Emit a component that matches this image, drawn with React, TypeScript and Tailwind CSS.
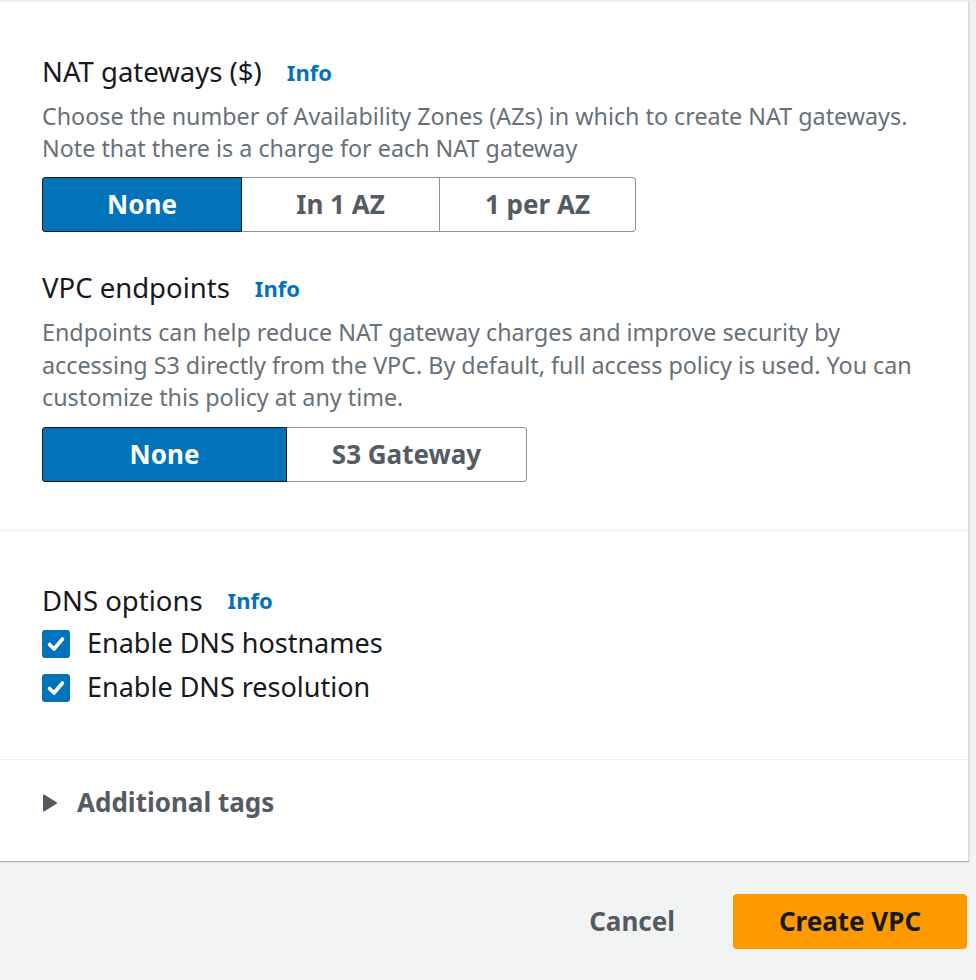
import React from "react";

const font = { fontFamily: '"Noto Sans", "Open Sans", sans-serif' };

function Info() {
  return <span className="ml-[25px] text-[22px] font-bold text-[#0073bb]">Info</span>;
}

function Segmented({ options, widths }: { options: string[]; widths: number[] }) {
  return (
    <div className="flex">
      {options.map((o, i) => {
        const sel = i === 0;
        const first = i === 0;
        const last = i === options.length - 1;
        return (
          <div
            key={o}
            style={{ width: widths[i] }}
            className={
              "h-[55px] flex items-center justify-center text-[26px] font-bold border " +
              (sel
                ? "bg-[#0073bb] text-white border-[#16191f] z-10 "
                : "bg-white text-[#545b64] border-[#879596] -ml-px ") +
              (first ? "rounded-l-[3px] " : "") +
              (last ? "rounded-r-[3px]" : "")
            }
          >
            {o}
          </div>
        );
      })}
    </div>
  );
}

function Check({ label }: { label: string }) {
  return (
    <div className="h-[44px] flex items-center">
      <div className="w-[28px] h-[28px] rounded-[3px] bg-[#0073bb] flex items-center justify-center">
        <svg width="22" height="22" viewBox="0 0 22 22">
          <path d="M4.5 11.5 L9 16 L17.5 6" fill="none" stroke="white" strokeWidth="3.6" strokeLinecap="round" strokeLinejoin="round" />
        </svg>
      </div>
      <span className="ml-[17px] text-[27px] text-[#16191f]">{label}</span>
    </div>
  );
}

export default function App() {
  return (
    <div style={font} className="w-[976px] h-[980px] bg-[#f2f3f3] flex flex-col">
      <div className="h-[2px] bg-[#eaeded]" />
      <div className="w-[969px] bg-white border-r border-[#d5dbdb] shadow-[0_1px_1px_0_rgba(0,28,36,0.3)]">
        <div className="px-[42px] pt-[54px] pb-[48px] border-b border-[#eaeded]">
          <div className="h-[32px] flex items-center text-[27.5px] text-[#16191f]">
            NAT gateways ($)
            <Info />
          </div>
          <div className="mt-[12px] text-[23.3px] leading-[32px] text-[#687078] whitespace-nowrap">
            Choose the number of Availability Zones (AZs) in which to create NAT gateways.
            <br />
            Note that there is a charge for each NAT gateway
          </div>
          <div className="mt-[13px]">
            <Segmented options={["None", "In 1 AZ", "1 per AZ"]} widths={[200, 199, 197]} />
          </div>
          <div className="mt-[40px] h-[32px] flex items-center text-[27.5px] text-[#16191f]">
            VPC endpoints
            <Info />
          </div>
          <div className="mt-[12px] text-[23.3px] leading-[32.5px] text-[#687078] whitespace-nowrap">
            Endpoints can help reduce NAT gateway charges and improve security by
            <br />
            accessing S3 directly from the VPC. By default, full access policy is used. You can
            <br />
            customize this policy at any time.
          </div>
          <div className="mt-[13px]">
            <Segmented options={["None", "S3 Gateway"]} widths={[245, 241]} />
          </div>
        </div>
        <div className="px-[42px] pt-[54px] pb-[49px] border-b border-[#eaeded]">
          <div className="h-[32px] flex items-center text-[27.5px] text-[#16191f]">
            DNS options
            <Info />
          </div>
          <div className="mt-[5px]">
            <Check label="Enable DNS hostnames" />
            <Check label="Enable DNS resolution" />
          </div>
        </div>
        <div className="h-[101px] px-[42px] pt-[27px]">
          <div className="h-[32px] flex items-center">
            <svg width="16" height="18" viewBox="0 0 16 18">
              <path d="M2 1.5 L14 9 L2 16.5 Z" fill="#545b64" stroke="#545b64" strokeWidth="2" strokeLinejoin="round" />
            </svg>
            <span className="ml-[19px] text-[26px] font-bold text-[#545b64]">Additional tags</span>
          </div>
        </div>
      </div>
      <div className="mt-[33px] pr-[9px] flex justify-end items-center gap-[58px]">
        <span className="text-[26px] font-bold text-[#545b64]">Cancel</span>
        <div className="w-[234px] h-[55px] rounded-[4px] bg-[#ff9900] flex items-center justify-center text-[26px] font-bold text-[#16191f]">
          Create VPC
        </div>
      </div>
    </div>
  );
}
